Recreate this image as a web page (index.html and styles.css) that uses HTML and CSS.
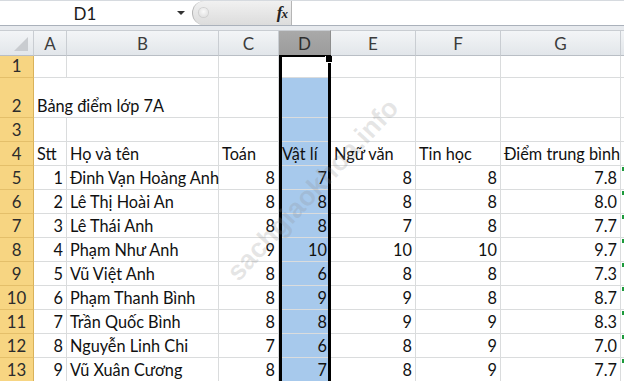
FILE: index.html
```html
<!DOCTYPE html>
<html lang="vi">
<head>
<meta charset="utf-8">
<title>Bảng điểm lớp 7A</title>
<link rel="stylesheet" href="styles.css">
</head>
<body>
<div class="app">
  <div class="formula-bar">
    <div class="namebox">
      <span class="namebox-ref">D1</span>
      <span class="namebox-arrow"></span>
    </div>
    <div class="fx-pill">
      <span class="grip"></span>
      <span class="fx"><i>f</i><i class="fx-x">x</i></span>
    </div>
    <div class="formula-input"></div>
  </div>
  <div class="strip"></div>

  <div class="sheet">
    <!-- column headers -->
    <div class="corner">
      <svg width="14" height="14" viewBox="0 0 14 14"><polygon points="14,0 14,14 0,14" fill="#c9ccd0"/></svg>
    </div>
    <div class="colhead">A</div>
    <div class="colhead">B</div>
    <div class="colhead">C</div>
    <div class="colhead active">D</div>
    <div class="colhead">E</div>
    <div class="colhead">F</div>
    <div class="colhead">G</div>
    <div class="colhead edge"></div>

    <!-- row 1 -->
    <div class="rowhead">1</div>
    <div class="cell"></div><div class="cell"></div><div class="cell"></div>
    <div class="cell"></div>
    <div class="cell"></div><div class="cell"></div><div class="cell"></div><div class="cell edge"></div>

    <!-- row 2 -->
    <div class="rowhead">2</div>
    <div class="cell span2">Bảng điểm lớp 7A</div>
    <div class="cell"></div>
    <div class="cell sel"></div>
    <div class="cell"></div><div class="cell"></div><div class="cell"></div><div class="cell edge"></div>

    <!-- row 3 -->
    <div class="rowhead">3</div>
    <div class="cell"></div><div class="cell"></div><div class="cell"></div>
    <div class="cell sel"></div>
    <div class="cell"></div><div class="cell"></div><div class="cell"></div><div class="cell edge"></div>

    <!-- row 4 -->
    <div class="rowhead">4</div>
    <div class="cell">Stt</div>
    <div class="cell">Họ và tên</div>
    <div class="cell">Toán</div>
    <div class="cell sel">Vật lí</div>
    <div class="cell">Ngữ văn</div>
    <div class="cell">Tin học</div>
    <div class="cell">Điểm trung bình</div>
    <div class="cell edge"></div>

    <div class="rowhead">5</div>
    <div class="cell num">1</div><div class="cell">Đinh Vạn Hoàng Anh</div>
    <div class="cell num">8</div><div class="cell num sel">7</div>
    <div class="cell num">8</div><div class="cell num">8</div><div class="cell num">7.8</div>
    <div class="cell edge flag"></div>

    <div class="rowhead">6</div>
    <div class="cell num">2</div><div class="cell">Lê Thị Hoài An</div>
    <div class="cell num">8</div><div class="cell num sel">8</div>
    <div class="cell num">8</div><div class="cell num">8</div><div class="cell num">8.0</div>
    <div class="cell edge flag"></div>

    <div class="rowhead">7</div>
    <div class="cell num">3</div><div class="cell">Lê Thái Anh</div>
    <div class="cell num">8</div><div class="cell num sel">8</div>
    <div class="cell num">7</div><div class="cell num">8</div><div class="cell num">7.7</div>
    <div class="cell edge flag"></div>

    <div class="rowhead">8</div>
    <div class="cell num">4</div><div class="cell">Phạm Như Anh</div>
    <div class="cell num">9</div><div class="cell num sel">10</div>
    <div class="cell num">10</div><div class="cell num">10</div><div class="cell num">9.7</div>
    <div class="cell edge flag"></div>

    <div class="rowhead">9</div>
    <div class="cell num">5</div><div class="cell">Vũ Việt Anh</div>
    <div class="cell num">8</div><div class="cell num sel">6</div>
    <div class="cell num">8</div><div class="cell num">8</div><div class="cell num">7.3</div>
    <div class="cell edge flag"></div>

    <div class="rowhead">10</div>
    <div class="cell num">6</div><div class="cell">Phạm Thanh Bình</div>
    <div class="cell num">8</div><div class="cell num sel">9</div>
    <div class="cell num">9</div><div class="cell num">8</div><div class="cell num">8.7</div>
    <div class="cell edge flag"></div>

    <div class="rowhead">11</div>
    <div class="cell num">7</div><div class="cell">Trần Quốc Bình</div>
    <div class="cell num">8</div><div class="cell num sel">8</div>
    <div class="cell num">9</div><div class="cell num">9</div><div class="cell num">8.3</div>
    <div class="cell edge flag"></div>

    <div class="rowhead">12</div>
    <div class="cell num">8</div><div class="cell">Nguyễn Linh Chi</div>
    <div class="cell num">7</div><div class="cell num sel">6</div>
    <div class="cell num">8</div><div class="cell num">9</div><div class="cell num">7.0</div>
    <div class="cell edge flag"></div>

    <div class="rowhead">13</div>
    <div class="cell num">9</div><div class="cell">Vũ Xuân Cương</div>
    <div class="cell num">8</div><div class="cell num sel">7</div>
    <div class="cell num">8</div><div class="cell num">9</div><div class="cell num">7.7</div>
    <div class="cell edge flag"></div>

    <!-- selected column outline with fill handle -->
    <div class="selection"><span class="fill-handle"></span></div>

    <div class="watermark">sachgiaokhoa.info</div>
  </div>
</div>
</body>
</html>
```

FILE: styles.css
```css
html, body {
  margin: 0;
  padding: 0;
  background: #ffffff;
}

.app {
  width: 624px;
  height: 381px;
  overflow: hidden;
  font-family: Lato, "Noto Sans", sans-serif;
  font-size: 16.3px;
  color: #111;
}

/* ---------- formula bar ---------- */
.formula-bar {
  display: flex;
  height: 26px;
  box-sizing: border-box;
  border-top: 1px solid #d6dadf;
  border-bottom: 1px solid #aab1bb;
  background: #fff;
}

.namebox {
  width: 192px;
  display: flex;
  align-items: center;
}

.namebox-ref {
  width: 170px;
  text-align: center;
  font-size: 17px;
  color: #1a1a1a;
}

.namebox-arrow {
  margin-left: 7px;
  width: 0;
  height: 0;
  border-left: 4px solid transparent;
  border-right: 4px solid transparent;
  border-top: 4px solid #333;
}

.fx-pill {
  width: 100px;
  box-sizing: border-box;
  display: flex;
  align-items: center;
  justify-content: space-between;
  padding: 0 4px 0 6px;
  background: linear-gradient(#f1f1f1, #dcdcdc);
  border: 1px solid #b5b5b5;
  border-top: none;
  border-bottom: none;
  border-radius: 13px 0 0 13px;
}

.grip {
  width: 9px;
  height: 9px;
  border-radius: 50%;
  background: radial-gradient(circle at 50% 40%, #fafafa, #dadada);
  box-shadow: 0 0 0 1px #d0d0d0;
  margin-bottom: 2px;
}

.fx {
  font-family: "Liberation Serif", serif;
  font-weight: bold;
  font-size: 17px;
  color: #222;
  letter-spacing: -1px;
}

.fx-x {
  font-size: 13px;
}

.formula-input {
  flex: 1;
  background: #fff;
}

.strip {
  height: 4px;
  background: #e7eaee;
}

/* ---------- sheet grid ---------- */
.sheet {
  position: relative;
  display: grid;
  grid-template-columns: 34px 33px 152px 60px 52px 85px 85px 120px 1fr;
  grid-template-rows: 26px 22px 40px repeat(11, 24px);
}

.corner,
.colhead {
  box-sizing: border-box;
  background: linear-gradient(#f3f5f7, #e2e6ea);
  border-top: 1px solid #c9cdd2;
  border-right: 1px solid #c9cdd2;
  border-bottom: 1px solid #b9bec5;
  display: flex;
  align-items: center;
  justify-content: center;
  color: #3c3c3c;
  font-size: 17px;
}

.corner {
  align-items: flex-end;
  justify-content: flex-end;
  padding: 0 5px 4px 0;
}

.colhead.active {
  background: linear-gradient(#a9a9a9, #9c9c9c);
  border-right-color: #8d8d8d;
  color: #2e2e2e;
}

.colhead.edge {
  border-right: none;
}

.rowhead {
  box-sizing: border-box;
  background: #f7d582;
  border-right: 1px solid #d9b25a;
  border-bottom: 1px solid #e4bf6a;
  display: flex;
  align-items: flex-end;
  justify-content: center;
  padding-bottom: 1px;
  color: #2c2c2c;
  font-size: 16.8px;
}

.cell {
  box-sizing: border-box;
  border-right: 1px solid #dadcdd;
  border-bottom: 1px solid #dadcdd;
  display: flex;
  align-items: flex-end;
  padding: 0 3px 1px 3px;
  white-space: nowrap;
  line-height: 20px;
  position: relative;
}

.cell.num {
  justify-content: flex-end;
}

.cell.span2 {
  grid-column: span 2;
}

.cell.sel {
  background: #a7c9ec;
}

.cell.edge {
  border-right: none;
}

/* green error-indicator corner */
.cell.flag::before {
  content: "";
  position: absolute;
  left: 1px;
  top: 1px;
  width: 2px;
  height: 4px;
  background: #1d9b3c;
}

.selection {
  position: absolute;
  left: 279px;
  top: 25px;
  width: 52px;
  bottom: -4px;
  box-sizing: border-box;
  border: 3px solid #000;
  border-top-width: 2px;
  border-bottom: none;
  pointer-events: none;
}

.fill-handle {
  position: absolute;
  right: -5px;
  top: -1px;
  width: 6px;
  height: 6px;
  background: #000;
  border: 1px solid #fff;
  border-top: none;
}

.watermark {
  position: absolute;
  left: 313px;
  top: 160px;
  transform: translate(-50%, -50%) rotate(-47deg);
  font-family: "Liberation Sans", sans-serif;
  font-weight: bold;
  font-size: 27px;
  color: rgba(140, 140, 140, 0.22);
  white-space: nowrap;
  pointer-events: none;
}
```
